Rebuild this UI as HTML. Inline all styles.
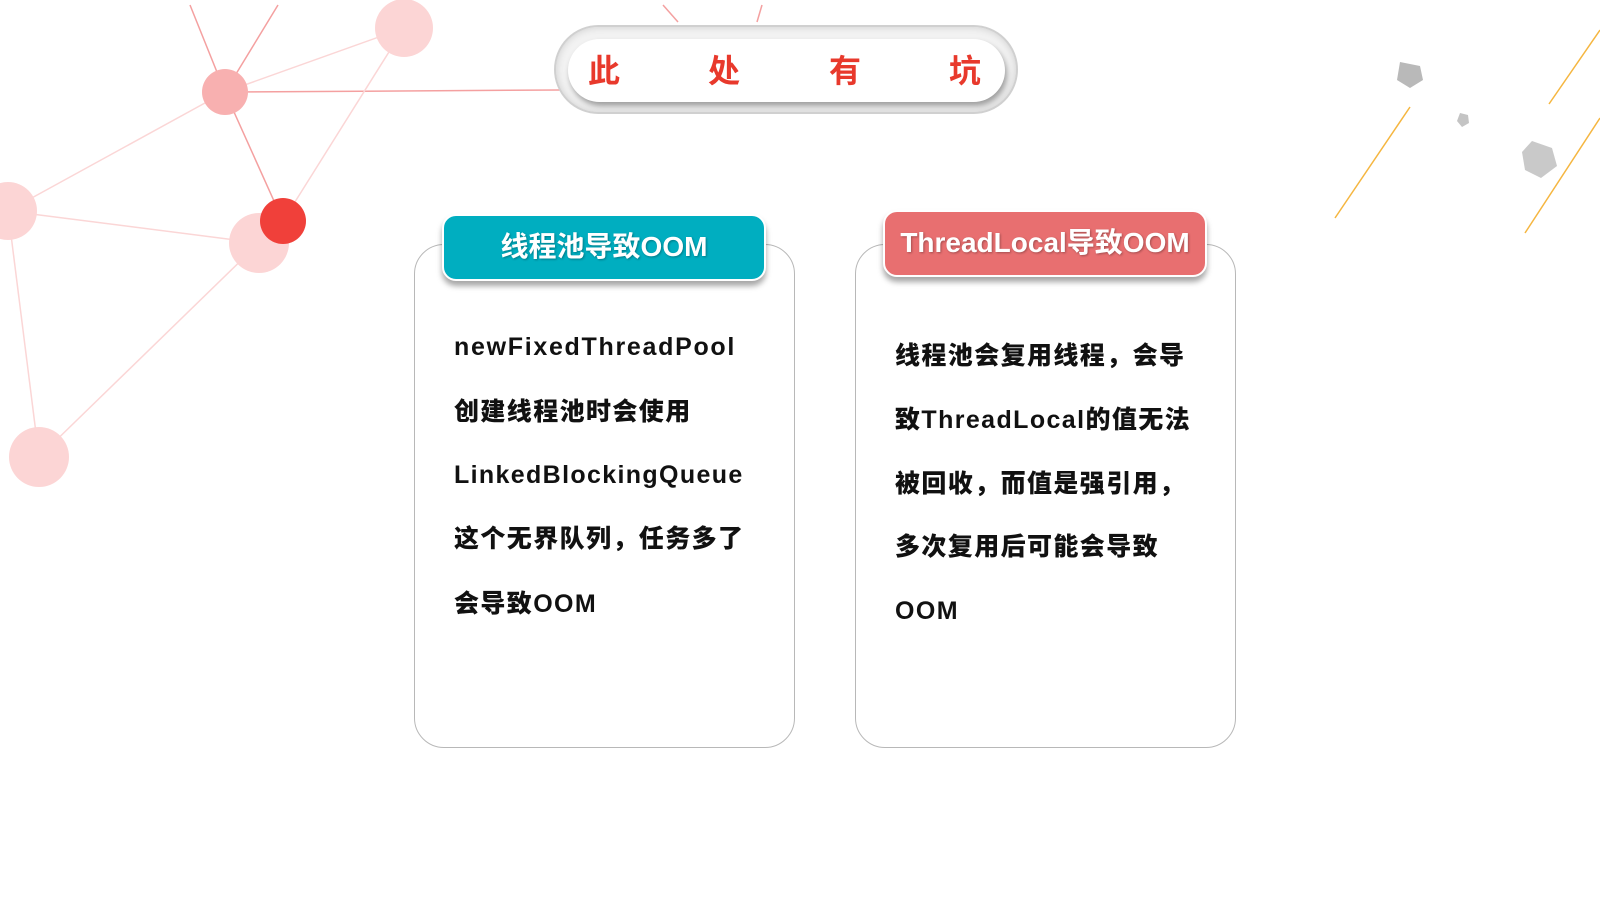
<!DOCTYPE html>
<html><head><meta charset="utf-8"><style>
html,body{margin:0;padding:0;width:1600px;height:900px;background:#fff;overflow:hidden;position:relative;font-family:"Liberation Sans","Noto Sans CJK SC",sans-serif}
.abs{position:absolute}
.card{position:absolute;border:1.5px solid #b8b8b8;border-radius:30px;background:#fff}
.hdr{position:absolute;border-radius:14px;color:#fff;font-weight:bold;font-size:28px;text-align:center;box-shadow:0 5px 6px rgba(0,0,0,.35);border:2px solid #fff;box-sizing:border-box;text-shadow:1px 1px 2px rgba(0,0,0,.3)}
.t{position:absolute;font-weight:900;font-size:25px;color:#111;white-space:nowrap;letter-spacing:1.4px;font-family:"Liberation Sans","Noto Sans CJK SC",sans-serif}
.l{letter-spacing:1.7px}
</style></head><body>
<svg class="abs" style="left:0;top:0" width="1600" height="900">
<g stroke="#f4a0a0" stroke-width="1.5" fill="none">
<line x1="190" y1="5" x2="225" y2="92"/><line x1="278" y1="5" x2="225" y2="92"/>
<line x1="225" y1="92" x2="560" y2="90"/><line x1="225" y1="92" x2="283" y2="221"/>
<line x1="663" y1="5" x2="678" y2="22"/><line x1="762" y1="5" x2="757" y2="22"/>
</g>
<g stroke="#fbd6d6" stroke-width="1.5" fill="none">
<line x1="225" y1="92" x2="404" y2="28"/><line x1="8" y1="211" x2="225" y2="92"/>
<line x1="8" y1="211" x2="259" y2="243"/><line x1="8" y1="211" x2="39" y2="457"/>
<line x1="39" y1="457" x2="259" y2="243"/><line x1="283" y1="221" x2="404" y2="28"/>
</g>
<g fill="#fcd5d5"><circle cx="404" cy="28" r="29"/><circle cx="259" cy="243" r="30"/><circle cx="8" cy="211" r="29"/><circle cx="39" cy="457" r="30"/></g>
<circle cx="225" cy="92" r="23" fill="#f8b0b0"/>
<circle cx="283" cy="221" r="23" fill="#f0403a"/>
<g stroke="#f5b640" stroke-width="1.5"><line x1="1335" y1="218" x2="1410" y2="107"/><line x1="1549" y1="104" x2="1600" y2="30"/><line x1="1525" y1="233" x2="1600" y2="118"/></g>
<polygon points="1400,62 1420,66 1423,80 1410,88 1397,80" fill="#b9b9b9"/>
<polygon points="1460,113 1468,115 1469,123 1462,127 1457,121" fill="#c4c4c4"/>
<polygon points="1532,141 1552,148 1557,166 1541,178 1525,170 1522,152" fill="#c9c9c9"/>
</svg>
<div class="abs" style="left:554px;top:25px;width:464px;height:89px;border-radius:45px;background:#f2f2f2;border:2px solid #d0d0d0;box-sizing:border-box;box-shadow:inset 0 0 8px rgba(0,0,0,.15)"></div>
<div class="abs" style="left:568px;top:39px;width:437px;height:63px;border-radius:32px;background:#fff;box-shadow:2px 4px 6px rgba(0,0,0,.35)"></div>
<div class="abs" style="left:588px;top:46px;font-size:32px;font-weight:bold;color:#e8392c">此</div>
<div class="abs" style="left:708px;top:46px;font-size:32px;font-weight:bold;color:#e8392c">处</div>
<div class="abs" style="left:829px;top:46px;font-size:32px;font-weight:bold;color:#e8392c">有</div>
<div class="abs" style="left:949px;top:46px;font-size:32px;font-weight:bold;color:#e8392c">坑</div>
<div class="card" style="left:414px;top:244px;width:379px;height:502px"></div>
<div class="card" style="left:855px;top:244px;width:379px;height:502px"></div>
<div class="hdr" style="left:442px;top:214px;width:324px;height:67px;line-height:62px;background:#00aec0">线程池导致OOM</div>
<div class="hdr" style="left:883px;top:210px;width:324px;height:67px;line-height:62px;background:#e86f70">ThreadLocal导致OOM</div>
<div class="t l" style="left:454px;top:333px">newFixedThreadPool</div>
<div class="t" style="left:454px;top:392px">创建线程池时会使用</div>
<div class="t" style="left:454px;top:461px;letter-spacing:1.35px">LinkedBlockingQueue</div>
<div class="t" style="left:454px;top:519px">这个无界队列，任务多了</div>
<div class="t" style="left:454px;top:584px">会导致OOM</div>
<div class="t" style="left:895px;top:336px">线程池会复用线程，会导</div>
<div class="t" style="left:895px;top:400px">致ThreadLocal的值无法</div>
<div class="t" style="left:895px;top:464px">被回收，而值是强引用，</div>
<div class="t" style="left:895px;top:527px">多次复用后可能会导致</div>
<div class="t" style="left:895px;top:597px">OOM</div>
</body></html>
